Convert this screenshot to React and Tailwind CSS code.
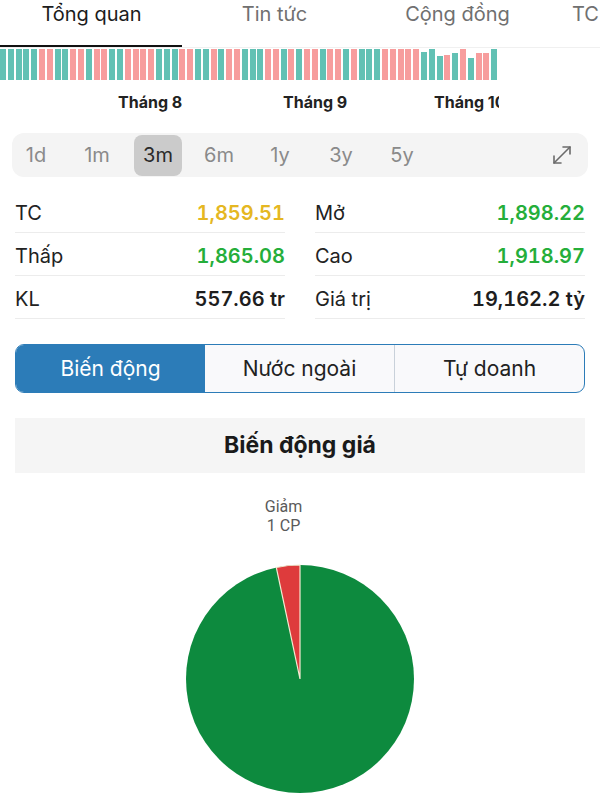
import React from "react";

const seq =
  "TTTTTPPTTPPTPPTTPPPPTTTPPTTPTPPT" + "TTPPTPTPPTPPTPTTTPPPPPTTTPTPTPPT";
const heights = {
  54: 28, 56: 24, 57: 25, 58: 27, 60: 22, 61: 27, 62: 27,
};

function Bars() {
  return (
    <div className="flex w-[498px] h-[32px] items-end justify-between">
      {seq.split("").map((c, i) => (
        <div
          key={i}
          className={c === "T" ? "w-[6px] bg-[#62c1b4]" : "w-[6px] bg-[#f79d9d]"}
          style={{ height: (heights[i] || 31) + "px" }}
        />
      ))}
    </div>
  );
}

function StatRow({ label, value, color }) {
  return (
    <div className="flex h-[43px] items-center justify-between border-b border-[#ececec] pt-[3px]">
      <span className="text-[20px] text-[#222]">{label}</span>
      <span className={`text-[20px] font-semibold tabular-nums ${color}`}>{value}</span>
    </div>
  );
}

function Pie() {
  const r = 114;
  const cx = 115;
  const cy = 115;
  const a = (-12 * Math.PI) / 180;
  const x1 = cx + r * Math.sin(a);
  const y1 = cy - r * Math.cos(a);
  return (
    <svg width="230" height="230" viewBox="0 0 230 230">
      <circle cx={cx} cy={cy} r={r} fill="#0d8a3e" />
      <path
        d={`M${cx} ${cy} L${x1} ${y1} A${r} ${r} 0 0 1 ${cx} ${cy - r} Z`}
        fill="#de3b3c"
        stroke="#f3ead2"
        strokeWidth="1.2"
      />
    </svg>
  );
}

export default function App() {
  const ranges = ["1d", "1m", "3m", "6m", "1y", "3y", "5y"];
  return (
    <div
      className="w-[600px] h-[800px] overflow-hidden bg-white"
      style={{ fontFamily: "Inter, 'Noto Sans', sans-serif" }}
    >
      {/* Tabs */}
      <div className="relative flex h-[48px] overflow-hidden border-b border-[#f0f0f0]">
        {["Tổng quan", "Tin tức", "Cộng đồng"].map((t, i) => (
          <div
            key={t}
            className={`w-[183px] shrink-0 flex justify-center leading-[28px] text-[20px] ${
              i === 0 ? "text-[#1c1c1c]" : "text-[#707070]"
            }`}
          >
            {t}
          </div>
        ))}
        <div className="shrink-0 pl-[23px] leading-[28px] text-[20px] text-[#707070] whitespace-nowrap">
          TC
        </div>
        <div className="absolute left-0 bottom-0 h-[2px] w-[182px] bg-[#111]" />
      </div>

      {/* Bars */}
      <Bars />

      {/* Months */}
      <div className="relative h-[42px] text-[16px] font-bold text-[#222]">
        <span className="absolute left-[118px] top-[10px]">Tháng 8</span>
        <span className="absolute left-[283px] top-[10px]">Tháng 9</span>
        <span className="absolute left-[434px] top-[10px] w-[65px] overflow-hidden whitespace-nowrap">Tháng 10</span>
      </div>

      {/* Range selector */}
      <div className="mx-[12px] mt-[11px] flex h-[44px] items-center rounded-[12px] bg-[#f4f4f4] pr-[14px]">
        <div className="flex gap-[13px]">
          {ranges.map((r) => (
            <div
              key={r}
              className={`flex h-[41px] w-[48px] items-center justify-center rounded-[8px] text-[20px] ${
                r === "3m" ? "bg-[#cbcbcb] text-[#2a2a2a]" : "text-[#8a8a8a]"
              }`}
            >
              {r}
            </div>
          ))}
        </div>
        <div className="ml-auto">
          <svg width="24" height="24" viewBox="0 0 24 24" fill="none" stroke="#6b6b6b" strokeWidth="1.6" strokeLinecap="round" strokeLinejoin="round">
            <path d="M4 20 L20 4" />
            <path d="M13 4 H20 V11" />
            <path d="M4 13 V20 H11" />
          </svg>
        </div>
      </div>

      {/* Stats */}
      <div className="mx-[15px] mt-[13px] grid grid-cols-2 gap-x-[30px]">
        <div>
          <StatRow label="TC" value="1,859.51" color="text-[#e5b722]" />
          <StatRow label="Thấp" value="1,865.08" color="text-[#25ae3a]" />
          <StatRow label="KL" value="557.66 tr" color="text-[#1e1e1e]" />
        </div>
        <div>
          <StatRow label="Mở" value="1,898.22" color="text-[#25ae3a]" />
          <StatRow label="Cao" value="1,918.97" color="text-[#25ae3a]" />
          <StatRow label="Giá trị" value="19,162.2 tỷ" color="text-[#1e1e1e]" />
        </div>
      </div>

      {/* Segmented */}
      <div className="mx-[15px] mt-[25px] flex h-[49px] overflow-hidden rounded-[9px] border-[1.5px] border-[#2c7cb8] bg-[#f9f9fb]">
        <div className="flex flex-1 items-center justify-center bg-[#2c7cb8] text-[21px] text-white">
          Biến động
        </div>
        <div className="flex flex-1 items-center justify-center border-r border-[#c9d1da] text-[21px] text-[#222]">
          Nước ngoài
        </div>
        <div className="flex flex-1 items-center justify-center text-[21px] text-[#222]">
          Tự doanh
        </div>
      </div>

      {/* Header */}
      <div className="mx-[15px] mt-[25px] flex h-[55px] items-center justify-center bg-[#f5f5f5] text-[23px] font-bold text-[#1a1a1a]">
        Biến động giá
      </div>

      {/* Pie labels */}
      <div className="mt-[24px] flex flex-col items-center pr-[33px] text-[16px] leading-[19px] text-[#5a5a5a]" style={{ fontFamily: "Roboto, sans-serif" }}>
        <span>Giảm</span>
        <span>1 CP</span>
      </div>

      <div className="mt-[29px] flex justify-center">
        <Pie />
      </div>
    </div>
  );
}
